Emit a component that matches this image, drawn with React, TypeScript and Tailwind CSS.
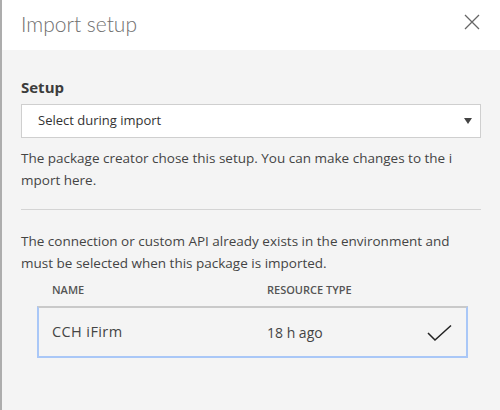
export default function App() {
  return (
    <div className="flex h-[410px] w-[500px] flex-col border-l-2 border-[#adadad] bg-[#f4f4f4] font-['Open_Sans','Noto_Sans',sans-serif] text-[#444]">
      <header className="flex h-[50px] shrink-0 items-start justify-between bg-white pl-[19px] pr-[20px]">
        <h1 className="mt-[10px] font-['Lato','Open_Sans',sans-serif] text-[21px] font-light leading-[28px] text-[#707070]">Import setup</h1>
        <button className="mt-[14px] text-[#666]" aria-label="Close">
          <svg width="16" height="16" viewBox="0 0 16 16" fill="none" stroke="currentColor" strokeWidth="1.3">
            <path d="M1 1 L15 15 M15 1 L1 15" />
          </svg>
        </button>
      </header>

      <main className="flex-1 px-[19px] pt-[27px]">
        <label className="block text-[15px] font-bold leading-[20px] text-[#3c3c3c]">Setup</label>
        <div className="mt-[7px] flex h-[34px] items-center justify-between border border-[#cfcfcf] bg-white pl-[16px] pr-[8px]">
          <span className="text-[13px] text-[#333]">Select during import</span>
          <svg width="8" height="6" viewBox="0 0 8 6" className="text-[#444]">
            <path d="M0 0 H8 L4 6 Z" fill="currentColor" />
          </svg>
        </div>

        <p className="mt-[9px] text-[13.5px] leading-[22px]">
          The package creator chose this setup. You can make changes to the i
          <br />
          mport here.
        </p>

        <hr className="mt-[18px] border-t border-[#d4d4d4]" />

        <p className="mt-[20px] text-[13.5px] leading-[22px]">
          The connection or custom API already exists in the environment and
          <br />
          must be selected when this package is imported.
        </p>

        <div className="ml-[16px] mr-[13px] mt-[6px]">
          <div className="grid grid-cols-[215px_1fr] pl-[15px] text-[11px] font-semibold uppercase leading-[20px] text-[#555]">
            <span>Name</span>
            <span>Resource Type</span>
          </div>
          <div className="mt-[6px] grid h-[52px] grid-cols-[215px_1fr_auto] items-center border-2 border-[#a9c7f7] border-t-[#c9c9c9] pl-[13px] pr-[14px] text-[14px] text-[#444]">
            <span className="text-[14.5px] tracking-[0.4px]">CCH iFirm</span>
            <span>18 h ago</span>
            <svg width="25" height="18" viewBox="0 0 25 18" fill="none" stroke="#222" strokeWidth="1.5" className="mt-[1px]">
              <path d="M1 9 L8 16 L24 1.5" />
            </svg>
          </div>
        </div>
      </main>
    </div>
  );
}
